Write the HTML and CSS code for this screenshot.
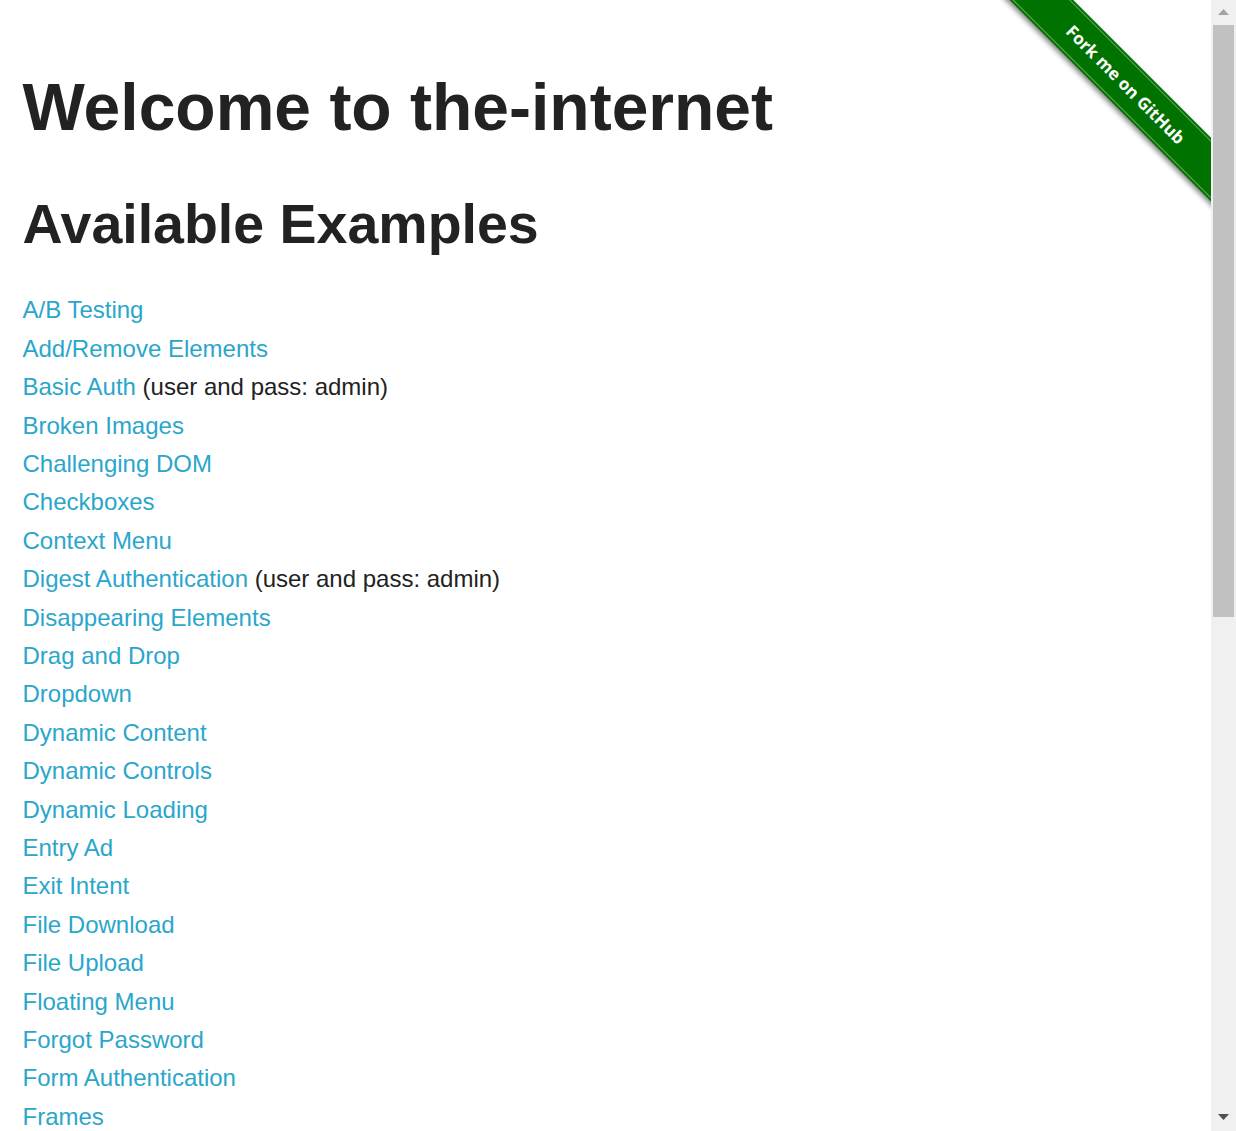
FILE: index.html
```html
<!DOCTYPE html>
<html lang="en">
<head>
<meta charset="utf-8">
<title>The Internet</title>
<link rel="stylesheet" href="styles.css">
</head>
<body>
<div class="app">
<div class="page">
  <a class="ribbon" href="#"><span class="band"><span class="band-inner">Fork me on GitHub</span></span></a>
  <div class="content">
    <h1 class="heading">Welcome to the-internet</h1>
    <h2 class="subheading">Available Examples</h2>
    <ul class="examples">
      <li><a href="#">A/B Testing</a></li>
      <li><a href="#">Add/Remove Elements</a></li>
      <li><a href="#">Basic Auth</a> (user and pass: admin)</li>
      <li><a href="#">Broken Images</a></li>
      <li><a href="#">Challenging DOM</a></li>
      <li><a href="#">Checkboxes</a></li>
      <li><a href="#">Context Menu</a></li>
      <li><a href="#">Digest Authentication</a> (user and pass: admin)</li>
      <li><a href="#">Disappearing Elements</a></li>
      <li><a href="#">Drag and Drop</a></li>
      <li><a href="#">Dropdown</a></li>
      <li><a href="#">Dynamic Content</a></li>
      <li><a href="#">Dynamic Controls</a></li>
      <li><a href="#">Dynamic Loading</a></li>
      <li><a href="#">Entry Ad</a></li>
      <li><a href="#">Exit Intent</a></li>
      <li><a href="#">File Download</a></li>
      <li><a href="#">File Upload</a></li>
      <li><a href="#">Floating Menu</a></li>
      <li><a href="#">Forgot Password</a></li>
      <li><a href="#">Form Authentication</a></li>
      <li><a href="#">Frames</a></li>
      <li><a href="#">Geolocation</a></li>
      <li><a href="#">Horizontal Slider</a></li>
      <li><a href="#">Hovers</a></li>
      <li><a href="#">Infinite Scroll</a></li>
      <li><a href="#">Inputs</a></li>
      <li><a href="#">JQuery UI Menus</a></li>
      <li><a href="#">JavaScript Alerts</a></li>
      <li><a href="#">JavaScript onload event error</a></li>
      <li><a href="#">Key Presses</a></li>
      <li><a href="#">Large &amp; Deep DOM</a></li>
      <li><a href="#">Multiple Windows</a></li>
      <li><a href="#">Nested Frames</a></li>
      <li><a href="#">Notification Messages</a></li>
      <li><a href="#">Redirect Link</a></li>
      <li><a href="#">Secure File Download</a></li>
      <li><a href="#">Shadow DOM</a></li>
      <li><a href="#">Shifting Content</a></li>
      <li><a href="#">Slow Resources</a></li>
      <li><a href="#">Sortable Data Tables</a></li>
      <li><a href="#">Status Codes</a></li>
      <li><a href="#">Typos</a></li>
      <li><a href="#">WYSIWYG Editor</a></li>
    </ul>
  </div>
  <div class="footer">
    <hr>
    <div class="footer-text">Powered by <a href="#">Elemental Selenium</a></div>
  </div>
</div>
<div class="scrollbar" aria-hidden="true">
  <div class="sb-btn sb-up"><svg width="11" height="6" viewBox="0 0 11 6"><polygon points="5.5,0 11,6 0,6" fill="#a3a3a3"/></svg></div>
  <div class="sb-track"><div class="sb-thumb"></div></div>
  <div class="sb-btn sb-down"><svg width="11" height="6" viewBox="0 0 11 6"><polygon points="0,0 11,0 5.5,6" fill="#505050"/></svg></div>
</div>
</div>
</body>
</html>
```
FILE: styles.css
```css
html, body {
  margin: 0;
  padding: 0;
  background: #fff;
  overflow: hidden;
}
body {
  font-family: "Liberation Sans", Arial, Helvetica, sans-serif;
  color: #222;
  font-size: 24px;
  line-height: 38.4px;
}
.app {
  display: flex;
  height: 100vh;
  overflow: hidden;
}
.page {
  position: relative;
  flex: 1;
  min-width: 0;
  overflow: hidden;
}
.content {
  padding: 67.5px 22.5px 0;
}
.heading {
  font-size: 66px;
  line-height: 79.2px;
  font-weight: bold;
  margin: 0;
  color: #222;
}
.subheading {
  font-size: 55.5px;
  line-height: 66.6px;
  font-weight: bold;
  margin: 43.8px 0 0;
  color: #222;
}
.examples {
  list-style: none;
  margin: 34.2px 0 0;
  padding: 0;
}
.examples li {
  margin: 0;
}
a {
  color: #2ba6cb;
  text-decoration: none;
}
.footer {
  width: 33%;
  margin: 30px auto 40px;
}
.footer hr {
  border: 0;
  border-top: 1px solid #ddd;
  margin: 30px 0;
}
.footer-text {
  text-align: center;
}
.ribbon {
  position: absolute;
  top: 0;
  right: 0;
  width: 223.5px;
  height: 223.5px;
  overflow: hidden;
  z-index: 2;
}
.band {
  position: absolute;
  left: -11.25px;
  top: 62.45px;
  width: 300px;
  height: 44.6px;
  transform: rotate(45deg);
  background: #007200;
  box-shadow: 0 3px 5px rgba(0, 0, 0, 0.45);
  display: flex;
  padding: 2px 0;
  box-sizing: border-box;
}
.band-inner {
  flex: 1;
  display: flex;
  align-items: center;
  justify-content: center;
  border-top: 1px solid rgba(255, 255, 255, 0.35);
  border-bottom: 1px solid rgba(255, 255, 255, 0.45);
  color: #fff;
  font-family: "Open Sans", "Noto Sans", sans-serif;
  font-weight: 700;
  font-size: 17px;
  line-height: 1;
}
.scrollbar {
  width: 25px;
  flex: 0 0 25px;
  background: #f0f0f0;
  display: flex;
  flex-direction: column;
}
.sb-btn {
  height: 25px;
  flex: 0 0 25px;
  display: flex;
  align-items: center;
  justify-content: center;
}
.sb-up svg {
  margin-top: -1px;
}
.sb-down svg {
  margin-top: -3px;
}
.sb-track {
  flex: 1;
  display: flex;
  flex-direction: column;
}
.sb-thumb {
  height: 592px;
  margin: 0 2px;
  background: #c1c1c1;
}
```
